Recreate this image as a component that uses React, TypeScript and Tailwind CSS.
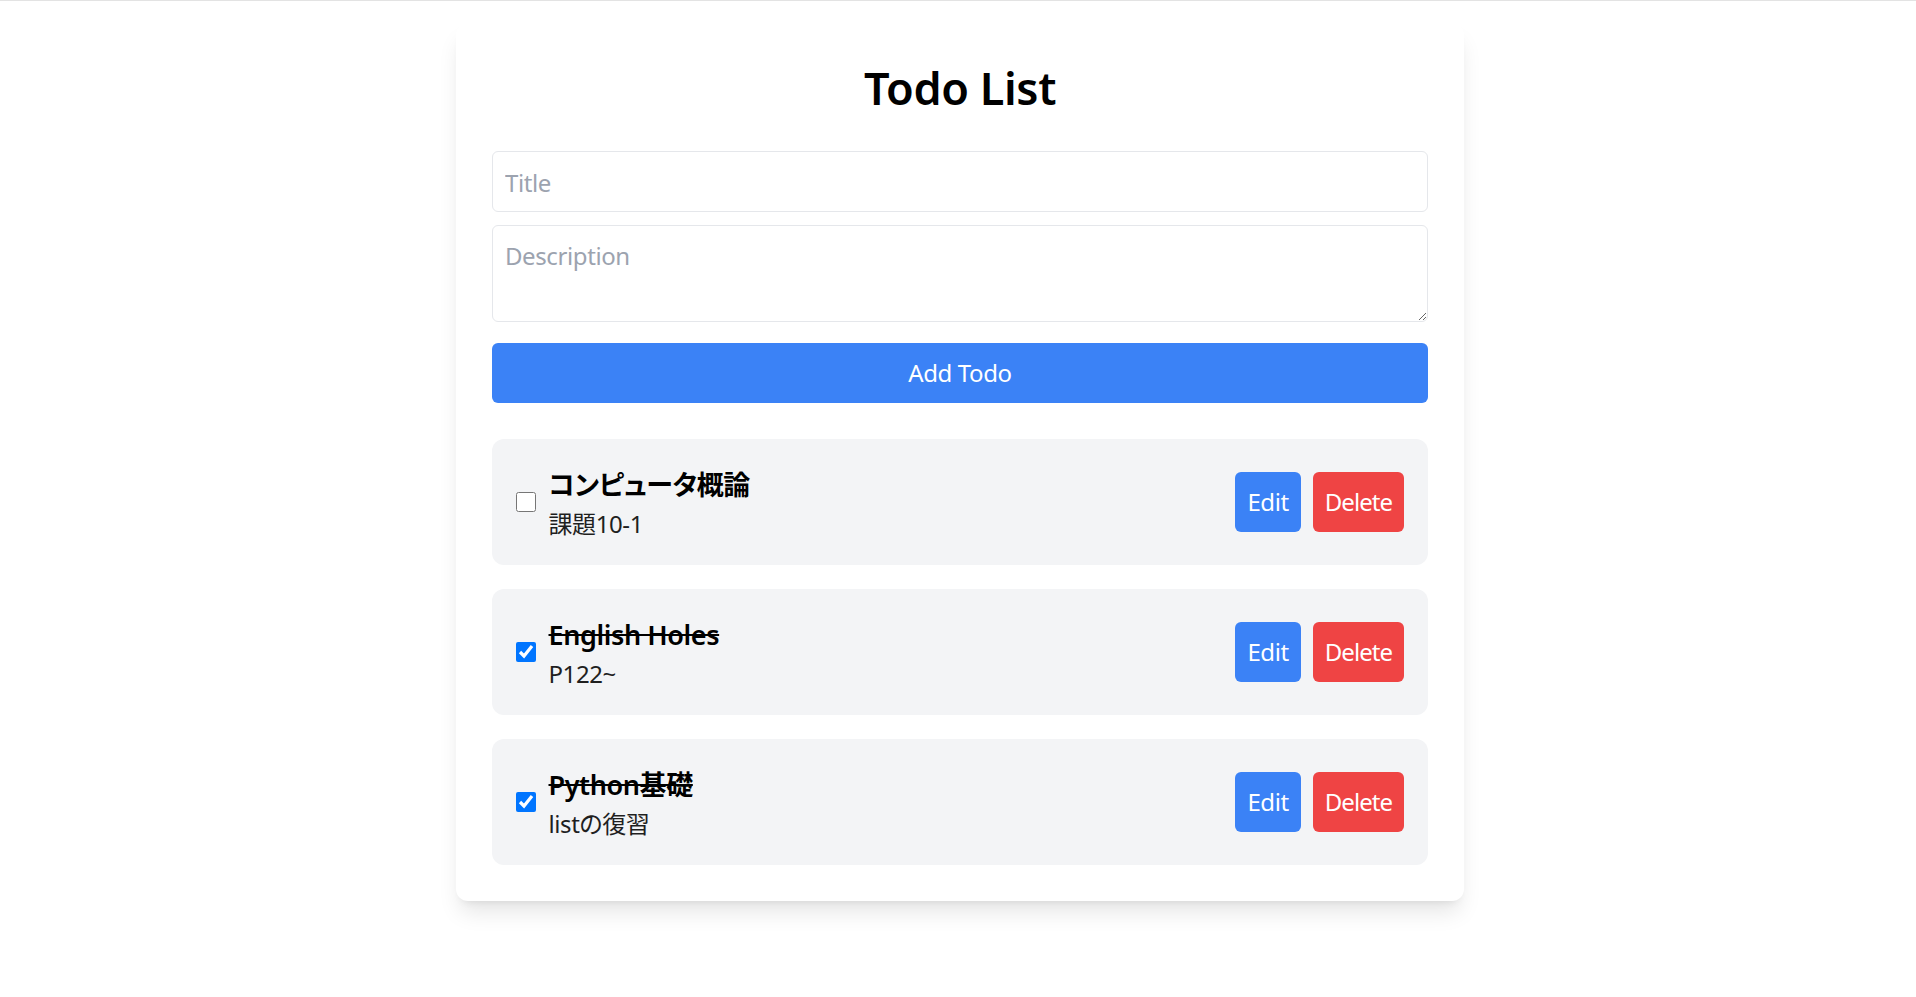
import { useState } from "react"

type Todo = {
  id: number
  title: string
  description: string
  done: boolean
}

const initialTodos: Todo[] = [
  { id: 1, title: "コンピュータ概論", description: "課題10-1", done: false },
  { id: 2, title: "English Holes", description: "P122~", done: true },
  { id: 3, title: "Python基礎", description: "listの復習", done: true },
]

function TodoItem({ todo, onToggle }: { todo: Todo; onToggle: () => void }) {
  return (
    <li className="flex items-center justify-between bg-[#f3f4f6] rounded-[12px] px-[24px] h-[126px]">
      <div className="flex items-center gap-[13px]">
        <input
          type="checkbox"
          checked={todo.done}
          onChange={onToggle}
          className="w-[19.5px] h-[19.5px] m-0"
        />
        <div className="flex flex-col pt-[2px]">
          <span
            className={
              "text-[27px] leading-[42px] font-semibold text-black " + (todo.done ? "line-through" : "")
            }
          >
            {todo.title}
          </span>
          <span className="text-[24px] leading-[36px] text-[#1f1f1f]">{todo.description}</span>
        </div>
      </div>
      <div className="flex items-center gap-[12px]">
        <button className="h-[60px] px-[12px] rounded-[6px] bg-[#3b82f6] text-white text-[24px] leading-[36px]">
          Edit
        </button>
        <button className="h-[60px] px-[12px] rounded-[6px] bg-[#ef4444] text-white text-[24px] leading-[36px] tracking-[-0.04em]">
          Delete
        </button>
      </div>
    </li>
  )
}

export default function App() {
  const [todos, setTodos] = useState(initialTodos)

  const toggle = (id: number) =>
    setTodos((prev) => prev.map((t) => (t.id === id ? { ...t, done: !t.done } : t)))

  return (
    <div
      className="min-h-screen bg-white border-t border-[#e3e3e3] pt-[22px] tracking-[-0.025em] [font-feature-settings:'palt']"
      style={{ fontFamily: '"Noto Sans", "Noto Sans CJK JP", sans-serif' }}
    >
      <div className="mx-auto w-[1008px] translate-x-[2px] bg-white rounded-[12px] p-[36px] shadow-[0_15px_22px_-4px_rgba(0,0,0,0.1),0_6px_9px_-6px_rgba(0,0,0,0.1)]">
        <h1 className="text-center text-[45px] leading-[54px] font-semibold text-black mt-[2px] mb-[36px]">
          Todo List
        </h1>

        {/* form */}
        <input
          type="text"
          placeholder="Title"
          className="block w-full h-[61px] px-[12px] pt-[2px] border border-[#e5e7eb] rounded-[6px] text-[24px] outline-none placeholder:text-[#9ca3af]"
        />
        <textarea
          placeholder="Description"
          className="block w-full h-[97px] mt-[13px] px-[12px] py-[12px] border border-[#e5e7eb] rounded-[6px] text-[24px] leading-[36px] outline-none placeholder:text-[#9ca3af]"
        />
        <button className="block w-full h-[60px] mt-[21px] rounded-[6px] bg-[#3b82f6] text-white text-[24px]">
          Add Todo
        </button>

        <ul className="mt-[36px] flex flex-col gap-[24px]">
          {todos.map((todo) => (
            <TodoItem key={todo.id} todo={todo} onToggle={() => toggle(todo.id)} />
          ))}
        </ul>
      </div>
    </div>
  )
}
